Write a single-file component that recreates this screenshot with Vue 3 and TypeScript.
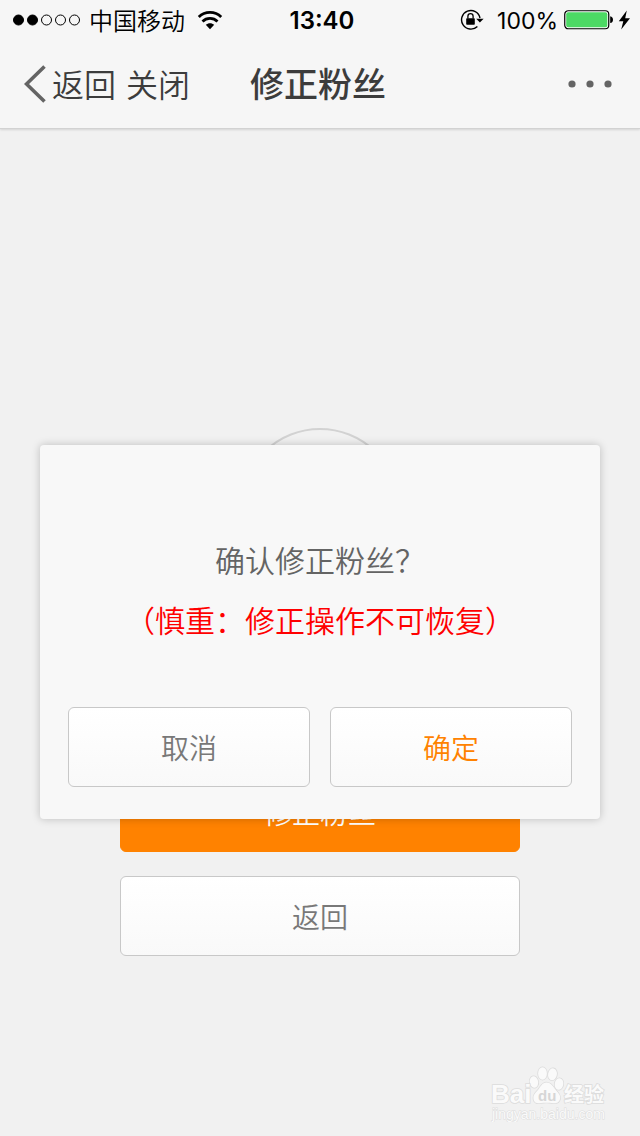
<script setup lang="ts">
import { ref } from 'vue'

const carrier = '中国移动'
const time = '13:40'
const battery = '100%'
const signal = [true, true, false, false, false]
const dialogOpen = ref(true)
</script>

<template>
  <div class="page" lang="zh-CN">
    <header class="top">
      <div class="status">
        <div class="status-left">
          <svg class="dots" width="68" height="12" viewBox="0 0 68 12" aria-hidden="true">
            <circle
              v-for="(on, i) in signal"
              :key="i"
              :cx="5.5 + i * 14"
              cy="6"
              r="5"
              :fill="on ? '#000' : 'none'"
              stroke="#000"
              stroke-width="1"
            />
          </svg>
          <span class="carrier">{{ carrier }}</span>
          <svg class="wifi" width="26" height="20" viewBox="0 0 26 20" aria-hidden="true">
            <g fill="none" stroke="#000" stroke-width="2.8">
              <path d="M1.8 6.9C8 .8 18 .8 24.2 6.9" />
              <path d="M5.5 11.400C9.700 7.300 16.300 7.300 20.500 11.400" />
            </g>
            <path d="M8.800 14.800C11.100 12.600 14.900 12.600 17.200 14.800L13 19.200Z" fill="#000" />
          </svg>
        </div>
        <time class="clock">{{ time }}</time>
        <div class="status-right">
          <svg class="lock" width="24" height="22" viewBox="0 0 24 22" aria-hidden="true">
            <path d="M17.400 17.400A9.300 9.300 0 1 1 20 9" fill="none" stroke="#000" stroke-width="1.4" />
            <path d="M16.200 9.700H23.600L19.900 13.400Z" fill="#000" />
            <rect x="6.200" y="9.200" width="8.600" height="6.600" rx=".8" fill="#000" />
            <path d="M7.900 9.500V7.200a2.600 2.600 0 0 1 5.200 0V9.500" fill="none" stroke="#000" stroke-width="1.3" />
          </svg>
          <span class="percent">{{ battery }}</span>
          <svg class="battery" width="50" height="20" viewBox="0 0 50 20" aria-hidden="true">
            <rect x=".75" y=".75" width="44" height="18" rx="3.5" fill="#fff" stroke="#000" stroke-width="1.2" />
            <rect x="2.200" y="2.200" width="41.100" height="15.100" rx="2" fill="#4cd964" />
            <path d="M46.200 6.300q2.800.6 2.800 3.400t-2.800 3.400z" fill="#000" />
          </svg>
          <svg class="bolt" width="13" height="20" viewBox="0 0 13 20" aria-hidden="true">
            <path d="M8.800 .5.800 11.200h4.500L3.200 19.500 12 8.200H7.200Z" fill="#000" />
          </svg>
        </div>
      </div>
      <nav class="nav">
        <div class="nav-left">
          <button class="nav-button" type="button">
            <svg width="24" height="40" viewBox="0 0 24 40" aria-hidden="true">
              <path d="M20.500 2.500 2.500 20 20.500 37.500" fill="none" stroke="#646464" stroke-width="3.600" />
            </svg>
            <span class="nav-label">返回</span>
          </button>
          <button class="nav-button" type="button"><span class="nav-label">关闭</span></button>
        </div>
        <h1 class="title">修正粉丝</h1>
        <button class="more" type="button" aria-label="更多">
          <svg width="44" height="8" viewBox="0 0 44 8" aria-hidden="true">
            <g fill="#646464">
              <circle cx="4" cy="4" r="3.6" />
              <circle cx="22" cy="4" r="3.6" />
              <circle cx="40" cy="4" r="3.6" />
            </g>
          </svg>
        </button>
      </nav>
    </header>

    <main class="content">
      <div class="ring"></div>
      <div class="actions">
        <button class="button primary" type="button" @click="dialogOpen = true">修正粉丝</button>
        <button class="button" type="button">返回</button>
      </div>

      <div v-if="dialogOpen" class="overlay">
        <section class="dialog" role="dialog" aria-labelledby="question">
          <p id="question" class="question">确认修正粉丝？</p>
          <p class="warning">（慎重：修正操作不可恢复）</p>
          <div class="choices">
            <button class="button" type="button" @click="dialogOpen = false">取消</button>
            <button class="button confirm" type="button" @click="dialogOpen = false">确定</button>
          </div>
        </section>
      </div>

      <svg class="mark" width="120" height="60" viewBox="0 0 120 60" role="img" aria-label="Baidu 经验">
        <g fill="#fafafa" stroke="#dcdcdc" stroke-width="1.6" paint-order="stroke">
          <ellipse cx="46" cy="20" rx="4.2" ry="5.800" transform="rotate(-10 46 20)" />
          <ellipse cx="54.500" cy="11.500" rx="4.400" ry="6.200" />
          <ellipse cx="64.500" cy="12.300" rx="4.400" ry="6" transform="rotate(10 64.500 12.300)" />
          <ellipse cx="71" cy="22" rx="4.300" ry="5.800" transform="rotate(8 71 22)" />
          <path d="M58.500 20.500c4 0 6 3 8.500 6.500s6 5.500 5 10-5 4.500-8 4-8-.5-11 0-7 .5-7.500-4 2-6 4.500-9 4-7.500 8.500-7.500z" />
          <text class="brand" x="3" y="41">Bai</text>
          <text class="guide" x="76" y="40">经验</text>
          <text class="site" x="4" y="57">jingyan.baidu.com</text>
        </g>
        <text class="paw-text" x="50" y="39" fill="#d6d6d6">du</text>
      </svg>
    </main>
  </div>
</template>

<style>
body {
  margin: 0;
  background: #f1f1f1;
}
</style>

<style scoped>
.page {
  display: flex;
  flex-direction: column;
  min-height: 100vh;
  background: #f1f1f1;
  font-family: Inter, "Noto Sans CJK SC", sans-serif;
  font-weight: 350;
  color: #646464;
}

button {
  margin: 0;
  padding: 0;
  border: 0;
  background: none;
  font: inherit;
  color: inherit;
  cursor: pointer;
}

svg {
  display: block;
  flex: none;
}

.top {
  background: #f6f6f6;
  box-shadow: 0 1px #d2d2d2, 0 2px 2px rgba(0, 0, 0, 0.12);
}

.status {
  display: grid;
  grid-template-columns: 1fr auto 1fr;
  align-items: center;
  height: 40px;
  padding: 0 9px 0 13px;
  font-size: 24px;
  line-height: 40px;
  color: #000;
}

.status-left,
.status-right {
  display: flex;
  align-items: center;
}

.dots {
  margin-right: 8px;
}

.carrier {
  padding-top: 4px;
  line-height: 36px;
}

.wifi {
  margin-left: 12px;
}

.clock {
  padding-top: 2px;
  font-size: 24px;
  line-height: 38px;
  font-weight: 600;
}

.status-right {
  justify-content: flex-end;
}

.percent {
  margin: 0 6px 0 13px;
  padding-top: 2px;
  font-size: 23px;
  line-height: 38px;
  font-weight: 400;
}

.bolt {
  margin-left: 4px;
}

.nav {
  display: grid;
  grid-template-columns: 1fr auto 1fr;
  align-items: center;
  height: 88px;
  padding: 0 28px 0 24px;
}

.nav-left {
  display: flex;
  align-items: center;
  gap: 10px;
  font-size: 32px;
  line-height: 48px;
  color: #3c3c3c;
}

.nav-button {
  display: flex;
  align-items: center;
  gap: 4px;
}

.nav-label {
  padding-top: 4px;
}

.title {
  margin: 0;
  padding-top: 2px;
  font-size: 34px;
  line-height: 48px;
  font-weight: 500;
  color: #3c3c3c;
}

.more {
  justify-self: end;
}

.content {
  position: relative;
  flex: 1;
  padding: 300px 120px 180px;
}

.ring {
  box-sizing: border-box;
  width: 160px;
  height: 160px;
  margin: 0 auto 184px;
  border: 2px solid #d2d2d2;
  border-radius: 50%;
}

.actions {
  display: flex;
  flex-direction: column;
  gap: 24px;
}

.button {
  box-sizing: border-box;
  height: 80px;
  padding-top: 4px;
  border: 1px solid #c8c8c8;
  border-radius: 6px;
  background: linear-gradient(#fff, #f9f9f9);
  font-size: 28px;
  line-height: 40px;
  color: #787878;
}

.primary {
  border-color: #ff8200;
  background: #ff8200;
  color: #fff;
}

.overlay {
  position: absolute;
  inset: 0;
  display: grid;
  align-items: center;
  padding: 0 40px;
}

.dialog {
  padding: 86px 28px 32px;
  border-radius: 4px;
  background: #f8f8f8;
  box-shadow: 0 0 8px rgba(0, 0, 0, 0.22);
  font-size: 30px;
  line-height: 60px;
  text-align: center;
}

.question,
.warning {
  margin: 0;
}

.warning {
  color: #f00;
}

.choices {
  display: grid;
  grid-template-columns: 1fr 1fr;
  gap: 20px;
  margin-top: 56px;
}

.confirm {
  color: #ff8200;
}

.mark {
  position: absolute;
  right: 32px;
  bottom: 14px;
}

.brand {
  font: 700 26px "Liberation Sans", sans-serif;
}

.guide {
  font: 700 20px "Noto Sans CJK SC", sans-serif;
}

.site {
  font: 400 14px "Liberation Sans", sans-serif;
  stroke-width: 1px;
}

.paw-text {
  font: 700 15px "Liberation Sans", sans-serif;
}
</style>
